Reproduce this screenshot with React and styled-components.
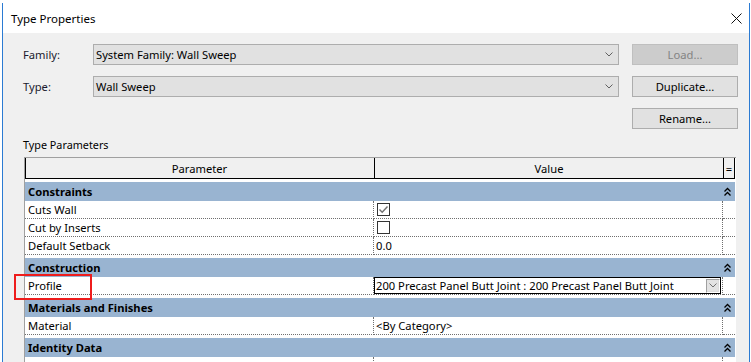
import React from "react";
import styled, { createGlobalStyle } from "styled-components";

const FONT = `"Noto Sans", "Open Sans", sans-serif`;

const GlobalStyle = createGlobalStyle`
    html, body {
        margin: 0;
        padding: 0;
        background: #ffffff;
        overflow: hidden;
        height: 362px;
    }
    body {
        font-family: ${FONT};
        font-size: 11.2px;
        color: #000;
    }
`;

const Window = styled.div`
    position: relative;
    margin: 3px 1px 0 2px;
    height: 359px;
    border-left: 1px solid #2b7bd3;
    border-right: 1px solid #2b7bd3;
    display: flex;
    flex-direction: column;
    overflow: hidden;
`;

const TitleBar = styled.div`
    height: 30px;
    flex: none;
    background: #fff;
    display: flex;
    align-items: center;
    justify-content: space-between;
    padding: 0 7px 0 8px;
    font-size: 11.5px;
    color: #000;
`;

const Body = styled.div`
    flex: 1;
    background: #f0f0f0;
    padding: 11px 0 0 20px;
`;

const TopGrid = styled.div`
    display: grid;
    grid-template-columns: 57px 526px 106px;
    grid-template-rows: repeat(3, 21px);
    column-gap: 13px;
    row-gap: 11px;
    align-items: center;
`;

const Label = styled.div`
    color: #1a1a2e;
`;

const Select = styled.div`
    height: 21px;
    box-sizing: border-box;
    border: 1px solid #adadad;
    background: #e1e1e1;
    display: flex;
    align-items: center;
    justify-content: space-between;
    padding: 0 5px 0 2px;
`;

const Button = styled.div`
    height: 21px;
    box-sizing: border-box;
    border: 1px solid ${p => (p.disabled ? "#bfbfbf" : "#adadad")};
    background: ${p => (p.disabled ? "#cccccc" : "#e1e1e1")};
    color: ${p => (p.disabled ? "#838383" : "#000")};
    display: flex;
    align-items: center;
    justify-content: center;
    grid-column: 3;
`;

const SectionLabel = styled.div`
    margin-top: 8px;
    height: 20px;
    line-height: 16px;
    font-size: 10.8px;
`;

const Table = styled.div`
    margin-left: 1px;
    width: 712px;
    box-sizing: border-box;
    border-left: 1px solid #a0a0a0;
    border-top: 1px solid #a0a0a0;
    padding-right: 1px;
    background: #fff;
`;

const Row = styled.div`
    display: grid;
    grid-template-columns: 349px 349px 12px;
`;

const HeadCell = styled.div`
    height: 20px;
    border-left: ${p => (p.first ? "none" : "1px solid #000")};
    border-right: ${p => (p.last ? "1px solid #000" : "none")};
    border-bottom: 1px solid #000;
    box-shadow: ${p => (p.first ? "inset 1px 0 0 #000" : "none")};
    background: #f0f0f0;
    display: flex;
    align-items: center;
    justify-content: center;
`;

const Group = styled.div`
    margin-top: 3px;
    height: 19px;
    background: #99b4d1;
    display: flex;
    align-items: center;
    justify-content: space-between;
    padding: 0 4px 0 3px;
    font-weight: bold;
`;

const Cell = styled.div`
    height: 17px;
    border-bottom: 1px dotted #6f6f6f;
    border-right: ${p => (p.noRight ? "none" : "1px dotted #6f6f6f")};
    display: flex;
    align-items: center;
    padding-left: ${p => p.pad || 0}px;
    white-space: nowrap;
    overflow: hidden;
`;

const Check = styled.div`
    width: 11px;
    height: 11px;
    border: 1px solid #333;
    background: #fff;
    display: flex;
    align-items: center;
    justify-content: center;
`;

const Combo = styled.div`
    flex: 1;
    height: 17px;
    box-sizing: border-box;
    border: 1px solid #000;
    display: flex;
    align-items: center;
    justify-content: space-between;
    padding-left: 1px;
    margin-right: 1px;
`;

const ComboButton = styled.div`
    width: 14px;
    height: 14px;
    box-sizing: border-box;
    background: #e3e3e3;
    border: 1px solid;
    border-color: #a0a0a0 #fff #fff #a0a0a0;
    box-shadow: inset -1px -1px 0 #dcdcdc;
    display: flex;
    align-items: center;
    justify-content: center;
`;

const Highlight = styled.div`
    position: absolute;
    left: 11px;
    top: 271px;
    width: 74px;
    height: 22px;
    border: 2px solid #ee1c1c;
`;

const Chevron = ({ color = "#606060" }) => (
    <svg width="8" height="5" viewBox="0 0 8 5">
        <path d="M0.5 0.5 L4 4 L7.5 0.5" fill="none" stroke={color} strokeWidth="1" />
    </svg>
);

const DoubleUp = () => (
    <svg width="7" height="9" viewBox="0 0 7 9">
        <path d="M0.5 4.5 L3.5 1.5 L6.5 4.5 M0.5 8.5 L3.5 5.5 L6.5 8.5" fill="none" stroke="#000" strokeWidth="1.3" />
    </svg>
);

const CloseIcon = () => (
    <svg width="11" height="11" viewBox="0 0 11 11">
        <path d="M0.5 0.5 L10.5 10.5 M10.5 0.5 L0.5 10.5" stroke="#111" strokeWidth="1" />
    </svg>
);

const CheckMark = () => (
    <svg width="11" height="11" viewBox="0 0 11 11">
        <path d="M1.5 5.5 L4.2 8.2 L9.5 2.5" fill="none" stroke="#707070" strokeWidth="1.4" />
    </svg>
);

const groups = [
    {
        name: "Constraints",
        rows: [
            { name: "Cuts Wall", kind: "check", checked: true },
            { name: "Cut by Inserts", kind: "check", checked: false },
            { name: "Default Setback", value: "0.0" },
        ],
    },
    {
        name: "Construction",
        rows: [{ name: "Profile", kind: "combo", value: "200 Precast Panel Butt Joint : 200 Precast Panel Butt Joint" }],
    },
    {
        name: "Materials and Finishes",
        rows: [{ name: "Material", value: "<By Category>" }],
    },
    {
        name: "Identity Data",
        rows: [{ name: "Subcategory of Walls", value: "None" }],
    },
];

const ValueCell = ({ row }) => {
    if (row.kind === "check") {
        return (
            <Cell pad={3}>
                <Check>{row.checked && <CheckMark />}</Check>
            </Cell>
        );
    }
    if (row.kind === "combo") {
        return (
            <Cell>
                <Combo>
                    <span>{row.value}</span>
                    <ComboButton>
                        <Chevron color="#707070" />
                    </ComboButton>
                </Combo>
            </Cell>
        );
    }
    return <Cell pad={2}>{row.value}</Cell>;
};

export default function App() {
    return (
        <>
            <GlobalStyle />
            <Window>
                <TitleBar>
                    <span>Type Properties</span>
                    <CloseIcon />
                </TitleBar>
                <Body>
                    <TopGrid>
                        <Label>Family:</Label>
                        <Select>
                            <span>System Family: Wall Sweep</span>
                            <Chevron />
                        </Select>
                        <Button disabled>Load...</Button>
                        <Label>Type:</Label>
                        <Select>
                            <span>Wall Sweep</span>
                            <Chevron />
                        </Select>
                        <Button>Duplicate...</Button>
                        <Button>Rename...</Button>
                    </TopGrid>
                    <SectionLabel>Type Parameters</SectionLabel>
                    <Table>
                        <Row>
                            <HeadCell first>Parameter</HeadCell>
                            <HeadCell>Value</HeadCell>
                            <HeadCell last>=</HeadCell>
                        </Row>
                        {groups.map(g => (
                            <React.Fragment key={g.name}>
                                <Group>
                                    <span>{g.name}</span>
                                    <DoubleUp />
                                </Group>
                                {g.rows.map(r => (
                                    <Row key={r.name}>
                                        <Cell pad={3}>{r.name}</Cell>
                                        <ValueCell row={r} />
                                        <Cell noRight />
                                    </Row>
                                ))}
                            </React.Fragment>
                        ))}
                    </Table>
                </Body>
                <Highlight />
            </Window>
        </>
    );
}
